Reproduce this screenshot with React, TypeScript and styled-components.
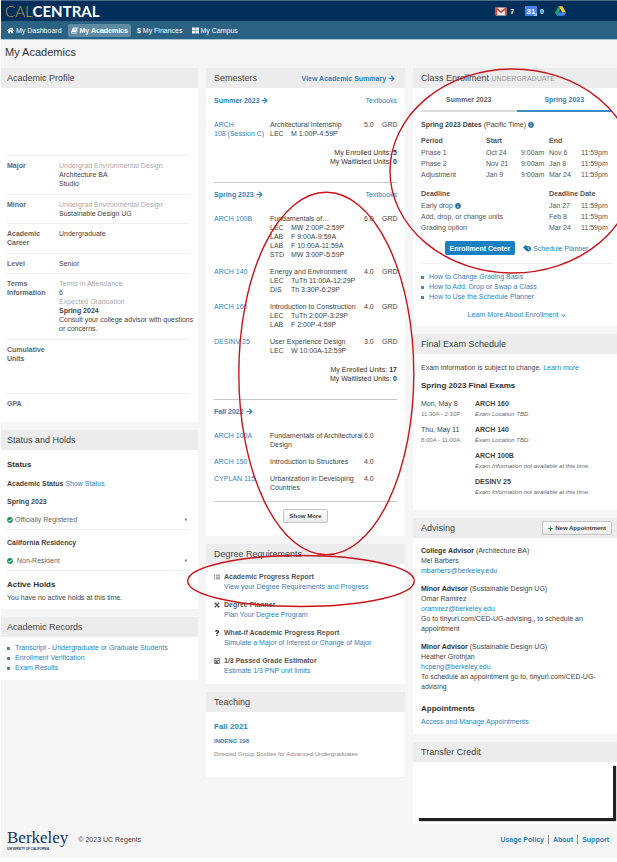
import React from "react";
import styled, { createGlobalStyle, css } from "styled-components";
import {
  FaArrowRight,
  FaCalculator,
  FaCaretLeft,
  FaCheckCircle,
  FaChevronDown,
  FaHome,
  FaInfoCircle,
  FaListUl,
  FaPlus,
  FaQuestion,
  FaThLarge,
} from "react-icons/fa";

const GlobalStyle = createGlobalStyle`
  * { box-sizing: border-box; }
  body {
    margin: 0;
    background: #fff;
    color: #444;
    font: 7px/9px "Liberation Sans", Arial, sans-serif;
  }
  h1, h2, h3, h4, p, ul, dl, dd, dt { margin: 0; padding: 0; }
  ul { list-style: none; }
  button { font-family: inherit; cursor: pointer; }
  svg { flex: none; }
`;

const Page = styled.div`
  position: relative;
  margin-left: 1px;
  background: #f5f5f5;
  overflow: hidden;
`;

/* ---------- top bars ---------- */

const TopBar = styled.header`
  display: flex;
  align-items: center;
  justify-content: space-between;
  height: 21px;
  padding: 0 51px 0 4px;
  border-top: 1px solid #47698a;
  background: #022f5a;
`;

const Brand = styled.a`
  font: 300 15px/18px Lato, sans-serif;
  color: #c79a3c;
  text-decoration: none;
  strong {
    font-weight: 700;
    color: #fff;
  }
`;

const Services = styled.div`
  display: flex;
  align-items: center;
  gap: 11px;
`;

const Service = styled.a`
  display: flex;
  align-items: center;
  gap: 3px;
  color: #fff;
  font-weight: 700;
  text-decoration: none;
`;

const NavBar = styled.nav`
  display: flex;
  align-items: center;
  gap: 3px;
  height: 19px;
  padding: 0 3px;
  border-bottom: 1px solid #a9c6d6;
  background: #2b6283;
`;

const NavItem = styled.a<{ $active?: boolean }>`
  display: flex;
  align-items: center;
  gap: 2px;
  height: 13px;
  padding: 0 3px;
  border-radius: 2px;
  color: #fff;
  text-decoration: none;
  ${(p) => p.$active && css`
    background: #5f8aa4;
    font-weight: 700;
  `}
`;

const PageTitle = styled.h1`
  padding: 6px 4px 9px;
  font-size: 11px;
  line-height: 13px;
  font-weight: 400;
  color: #333;
`;

/* ---------- cards ---------- */

const Columns = styled.main`
  display: grid;
  grid-template-columns: minmax(0, 197fr) minmax(0, 199fr) minmax(0, 204fr);
  gap: 8px;
  align-items: start;
`;

const Column = styled.div`
  display: flex;
  flex-direction: column;
  gap: 8px;
`;

const CardBox = styled.section`
  background: #fff;
`;

const CardHeader = styled.header<{ $inset: number }>`
  display: flex;
  align-items: center;
  justify-content: space-between;
  height: 20px;
  padding: 0 5px 0 ${(p) => p.$inset}px;
  background: #ececec;
`;

const CardTitle = styled.h2`
  font-size: 9px;
  line-height: 12px;
  font-weight: 400;
  color: #444;
  small {
    font-size: 7px;
    color: #999;
  }
`;

const CardBody = styled.div<{ $pad: string }>`
  padding: ${(p) => p.$pad};
`;

const Link = styled.a<{ $strong?: boolean }>`
  color: #2f83bd;
  text-decoration: none;
  font-weight: ${(p) => (p.$strong ? 700 : 400)};
  svg {
    vertical-align: -1px;
  }
`;

const Heading = styled.h3`
  font-size: 8px;
  line-height: 10px;
  font-weight: 700;
  color: #333;
`;

const SmallHeading = styled.h4`
  font-size: 7px;
  line-height: 9px;
  font-weight: 700;
  color: #444;
`;

const SmallButton = styled.button`
  display: inline-flex;
  align-items: center;
  justify-content: center;
  gap: 2px;
  height: 14px;
  padding: 0 5px;
  border: 1px solid #c4c4c4;
  border-radius: 2px;
  background: linear-gradient(#fff, #ececec);
  color: #444;
  font-size: 6px;
  font-weight: 700;
  line-height: 8px;
  white-space: nowrap;
`;

function Card(props: {
  title: React.ReactNode;
  pad: string;
  inset?: number;
  action?: React.ReactNode;
  children?: React.ReactNode;
}) {
  return (
    <CardBox>
      <CardHeader $inset={props.inset ?? 8}>
        <CardTitle>{props.title}</CardTitle>
        {props.action}
      </CardHeader>
      <CardBody $pad={props.pad}>{props.children}</CardBody>
    </CardBox>
  );
}

/* ---------- academic profile ---------- */

const ProfileList = styled.dl`
  padding-top: 67px;
`;

const ProfileRow = styled.div<{ $height: number }>`
  display: grid;
  grid-template-columns: 52px minmax(0, 1fr);
  min-height: ${(p) => p.$height}px;
  padding: 5px 0;
  border-top: 1px solid #f0f0f0;
  dt {
    padding-right: 6px;
    font-weight: 700;
    color: #666;
  }
  dd {
    white-space: nowrap;
  }
`;

const Muted = styled.div`
  color: #aaa;
`;

/* ---------- status ---------- */

const StatusRow = styled.div`
  display: flex;
  align-items: center;
  gap: 2px;
  height: 20px;
  margin-top: 4px;
  color: #666;
  border-bottom: 1px solid #eee;
  svg:last-child {
    margin-left: auto;
    margin-right: 2px;
  }
`;

const Stack = styled.div<{ $gap: number }>`
  display: flex;
  flex-direction: column;
  gap: ${(p) => p.$gap}px;
`;

const BulletList = styled.ul`
  line-height: 10px;
  li {
    display: flex;
    align-items: center;
    gap: 5px;
  }
  li::before {
    content: "";
    width: 3px;
    height: 3px;
    background: #4e86a8;
  }
`;

/* ---------- semesters ---------- */

const Term = styled.section<{ $last?: boolean }>`
  padding: 7px 0 ${(p) => (p.$last ? 1 : 16)}px;
  border-bottom: 1px solid #c8c8c8;
`;

const TermHeader = styled.div`
  display: flex;
  justify-content: space-between;
  margin-bottom: 14px;
  line-height: 10px;
`;

const Course = styled.div`
  display: grid;
  grid-template-columns: 56px minmax(0, 1fr) 18px 15px;
  margin-bottom: 8px;
  color: #444;
`;

const CourseName = styled.div`
  white-space: pre-line;
`;

const Meeting = styled.div`
  display: grid;
  grid-template-columns: 21px 1fr;
`;

const UnitTotals = styled.div`
  padding-top: 2px;
  text-align: right;
  color: #333;
`;

const ShowMore = styled.div`
  display: flex;
  justify-content: center;
  padding-top: 7px;
`;

type CourseData = {
  code: string;
  name: string;
  units: string;
  graded?: boolean;
  meetings?: [string, string][];
};

const terms: { name: string; enrolled?: string; courses: CourseData[] }[] = [
  {
    name: "Summer 2023",
    enrolled: "5",
    courses: [
      { code: "ARCH\n108 (Session C)", name: "Architectural Internship", units: "5.0", graded: true, meetings: [["LEC", "M 1:00P-4:59P"]] },
    ],
  },
  {
    name: "Spring 2023",
    enrolled: "17",
    courses: [
      {
        code: "ARCH 100B",
        name: "Fundamentals of…",
        units: "6.0",
        graded: true,
        meetings: [["LEC", "MW 2:00P-2:59P"], ["LAB", "F 9:00A-9:59A"], ["LAB", "F 10:00A-11:59A"], ["STD", "MW 3:00P-5:59P"]],
      },
      { code: "ARCH 140", name: "Energy and Environment", units: "4.0", graded: true, meetings: [["LEC", "TuTh 11:00A-12:29P"], ["DIS", "Th 3:30P-6:29P"]] },
      { code: "ARCH 160", name: "Introduction to Construction", units: "4.0", graded: true, meetings: [["LEC", "TuTh 2:00P-3:29P"], ["LAB", "F 2:00P-4:59P"]] },
      { code: "DESINV 25", name: "User Experience Design", units: "3.0", graded: true, meetings: [["LEC", "W 10:00A-12:59P"]] },
    ],
  },
  {
    name: "Fall 2022",
    courses: [
      { code: "ARCH 100A", name: "Fundamentals of Architectural\nDesign", units: "6.0" },
      { code: "ARCH 150", name: "Introduction to Structures", units: "4.0" },
      { code: "CYPLAN 115", name: "Urbanization in Developing\nCountries", units: "4.0" },
    ],
  },
];

/* ---------- degree requirements ---------- */

const Tool = styled.div`
  display: grid;
  grid-template-columns: 10px minmax(0, 1fr);
  line-height: 10px;
  color: #555;
  > svg {
    margin-top: 2px;
  }
`;

const ToolIconX = () => (
  <svg width="6" height="6" viewBox="0 0 12 12" fill="none" stroke="#555">
    <path d="M1.5 1.5 10.5 10.5" strokeWidth="3" />
    <path d="M10.5 1.5 1.5 10.5" strokeWidth="2.4" />
    <path d="M1 4 4 1M8 11 11 8" strokeWidth="1.2" />
  </svg>
);

const tools = [
  { icon: <FaListUl size={6} />, title: "Academic Progress Report", link: "View your Degree Requirements and Progress" },
  { icon: <ToolIconX />, title: "Degree Planner", link: "Plan Your Degree Program" },
  { icon: <FaQuestion size={6} color="#222" />, title: "What-if Academic Progress Report", link: "Simulate a Major of Interest or Change of Major" },
  { icon: <FaCalculator size={6} />, title: "1/3 Passed Grade Estimator", link: "Estimate 1/3 PNP unit limits" },
];

const Caption = styled.p`
  font-size: 6px;
  line-height: 8px;
  color: #888;
`;

/* ---------- enrollment ---------- */

const Tabs = styled.div`
  display: grid;
  grid-template-columns: 1fr 1fr;
`;

const Tab = styled.button<{ $active?: boolean }>`
  height: 24px;
  padding: 0;
  border: 0;
  border-bottom: ${(p) => (p.$active ? "2px solid #3b8cc4" : "2px solid #dcdcdc")};
  background: none;
  color: ${(p) => (p.$active ? "#2f83bd" : "#666")};
  font-size: 7px;
  line-height: 9px;
  font-weight: 700;
`;

const DatesTitle = styled.p`
  display: flex;
  align-items: center;
  gap: 2px;
  margin: 8px 0 6px;
`;

const DateTable = styled.table`
  width: 100%;
  table-layout: fixed;
  border-collapse: collapse;
  line-height: 11px;
  color: #555;
  margin-bottom: 8px;
  th, td {
    padding: 0;
    text-align: left;
    white-space: nowrap;
  }
  th {
    padding-bottom: 1px;
  }
  td svg {
    vertical-align: -1px;
  }
`;

const Actions = styled.div`
  display: flex;
  align-items: center;
  justify-content: center;
  gap: 8px;
  padding-bottom: 8px;
  border-bottom: 1px solid #eee;
  margin-bottom: 8px;
`;

const PrimaryButton = styled.button`
  height: 14px;
  padding: 0 5px;
  border: 0;
  border-radius: 2px;
  background: #1780c2;
  color: #fff;
  font-size: 7px;
  line-height: 9px;
  font-weight: 700;
`;

const CenteredLink = styled.p`
  margin-top: 8px;
  text-align: center;
`;

const PlannerIcon = () => (
  <svg width="8" height="8" viewBox="0 0 16 16">
    <path d="M6 1 0 7l6 6V9.500h3v-5H6z" fill="#1f75ad" />
    <circle cx="10.500" cy="9.500" r="5.500" fill="#1f75ad" />
    <path d="M10.500 6v4l2.500 1.500" fill="none" stroke="#fff" strokeWidth="1.500" />
  </svg>
);

/* ---------- exams ---------- */

const Exams = styled.div`
  display: flex;
  flex-direction: column;
  gap: 6px;
  margin-top: 8px;
`;

const Exam = styled.div`
  display: grid;
  grid-template-columns: 54px minmax(0, 1fr);
  line-height: 10px;
  small {
    display: block;
    font-size: 6px;
    color: #777;
    white-space: nowrap;
  }
  em {
    display: block;
    font-size: 6px;
    color: #666;
    white-space: nowrap;
  }
`;

const exams = [
  { date: "Mon, May 8", time: "11:30A - 2:30P", name: "ARCH 160", note: "Exam Location TBD" },
  { date: "Thu, May 11", time: "8:00A - 11:00A", name: "ARCH 140", note: "Exam Location TBD" },
  { date: "", time: "", name: "ARCH 100B", note: "Exam Information not available at this time." },
  { date: "", time: "", name: "DESINV 25", note: "Exam Information not available at this time." },
];

/* ---------- advising ---------- */

const Advisor = styled.div`
  line-height: 10px;
  white-space: pre-line;
  b {
    color: #333;
  }
`;

const CreditBox = styled.div`
  height: 55px;
  background: #fff;
  box-shadow: 3px 3px 1px #222;
`;

/* ---------- footer ---------- */

const Footer = styled.footer`
  display: flex;
  align-items: center;
  gap: 10px;
  padding: 4px 8px 7px 6px;
`;

const Wordmark = styled.div`
  color: #17365f;
  font: 17px/19px "Liberation Serif", serif;
  small {
    display: block;
    font: 700 3px/4px "Liberation Sans", sans-serif;
  }
`;

const FooterLinks = styled.div`
  display: flex;
  align-items: center;
  margin-left: auto;
  a + a {
    margin-left: 4px;
    padding-left: 4px;
    border-left: 1px solid #888;
  }
`;

/* ---------- hand-drawn ovals over the page ---------- */

const Markup = styled.svg`
  position: absolute;
  left: -1px;
  top: 0;
  pointer-events: none;
`;

const Gmail = () => (
  <svg width="12" height="9" viewBox="0 0 24 18">
    <rect x="1" y="1" width="22" height="16" rx="1.500" fill="#f3f1f0" />
    <path d="M4 17 10 9.500M20 17 14 9.500" stroke="#cfc9c7" strokeWidth="1" />
    <path d="M2.500 17V2.500L12 10.500l9.500-8V17" fill="none" stroke="#d8473a" strokeWidth="3.400" />
  </svg>
);

const Calendar = () => (
  <svg width="12" height="10" viewBox="0 0 24 20">
    <rect width="24" height="20" rx="1.500" fill="#4384ee" />
    <path d="M24 14v6h-6z" fill="#bcd4fb" />
    <text x="12" y="16" textAnchor="middle" fontFamily="Liberation Sans, sans-serif" fontSize="16" fill="#fff">31</text>
  </svg>
);

const Drive = () => (
  <svg width="11" height="10" viewBox="0 0 24 21">
    <path d="M8 0h8l8 14h-8z" fill="#fbc936" />
    <path d="M8 0 0 14l4 7 8-14z" fill="#1fa463" />
    <path d="M8 14h16l-4 7H4z" fill="#4285f4" />
  </svg>
);

const Book = () => (
  <svg width="7" height="7" viewBox="0 0 14 14">
    <path d="M5 1h8.500L10.500 10.500H2.500C1.500 10.500 1.500 12 2.500 12H11l2.500-8 .5 1-2.500 8H2C.5 13 0 11.500.500 10.200L3.300 2.200Q3.800 1 5 1z" fill="#fff" />
    <path d="M5.800 3.500h5M5.200 5.500h5" stroke="#5f8aa4" strokeWidth="1" />
  </svg>
);

const Info = () => <FaInfoCircle size={6} color="#2b6f9f" />;

export default function App() {
  return (
    <>
      <GlobalStyle />
      <Page>
        <TopBar>
          <Brand href="#">CAL<strong>CENTRAL</strong></Brand>
          <Services>
            <Service href="#" aria-label="Mail"><Gmail />7</Service>
            <Service href="#" aria-label="Calendar"><Calendar />0</Service>
            <Service href="#" aria-label="Drive"><Drive /></Service>
          </Services>
        </TopBar>
        <NavBar>
          <NavItem href="#"><FaHome size={7} />My Dashboard</NavItem>
          <NavItem href="#" $active><Book />My Academics</NavItem>
          <NavItem href="#"><b>$</b>My Finances</NavItem>
          <NavItem href="#"><FaThLarge size={7} />My Campus</NavItem>
        </NavBar>
        <PageTitle>My Academics</PageTitle>

        <Columns>
          <Column>
            <Card title="Academic Profile" pad="0 8px 0 6px" inset={6}>
              <ProfileList>
                <ProfileRow $height={39}>
                  <dt>Major</dt>
                  <dd><Muted>Undergrad Environmental Design</Muted>Architecture BA<br />Studio</dd>
                </ProfileRow>
                <ProfileRow $height={29}>
                  <dt>Minor</dt>
                  <dd><Muted>Undergrad Environmental Design</Muted>Sustainable Design UG</dd>
                </ProfileRow>
                <ProfileRow $height={30}>
                  <dt>Academic Career</dt>
                  <dd>Undergraduate</dd>
                </ProfileRow>
                <ProfileRow $height={20}>
                  <dt>Level</dt>
                  <dd>Senior</dd>
                </ProfileRow>
                <ProfileRow $height={66}>
                  <dt>Terms Information</dt>
                  <dd>
                    <Muted>Terms in Attendance</Muted>6
                    <Muted>Expected Graduation</Muted>
                    <b>Spring 2024</b><br />
                    Consult your college advisor with questions<br />
                    or concerns.
                  </dd>
                </ProfileRow>
                <ProfileRow $height={54}><dt>Cumulative Units</dt><dd /></ProfileRow>
                <ProfileRow $height={29}><dt>GPA</dt><dd /></ProfileRow>
              </ProfileList>
            </Card>

            <Card title="Status and Holds" pad="10px 8px 7px 6px" inset={6}>
              <Stack $gap={9}>
                <Heading>Status</Heading>
                <p><b>Academic Status</b> <Link href="#">Show Status</Link></p>
                <SmallHeading>Spring 2023</SmallHeading>
              </Stack>
              <StatusRow>
                <FaCheckCircle size={6} color="#1c8a4a" />Officially Registered
                <FaCaretLeft size={5} />
              </StatusRow>
              <CardBody $pad="8px 0 0"><SmallHeading>California Residency</SmallHeading></CardBody>
              <StatusRow>
                <FaCheckCircle size={6} color="#1c8a4a" />&nbsp;Non-Resident
                <FaCaretLeft size={5} />
              </StatusRow>
              <CardBody $pad="9px 0 0">
                <Stack $gap={3}>
                  <Heading>Active Holds</Heading>
                  <p>You have no active holds at this time.</p>
                </Stack>
              </CardBody>
            </Card>

            <Card title="Academic Records" pad="6px 8px 7px 6px" inset={6}>
              <BulletList>
                <li><Link href="#">Transcript - Undergraduate or Graduate Students</Link></li>
                <li><Link href="#">Enrollment Verification</Link></li>
                <li><Link href="#">Exam Results</Link></li>
              </BulletList>
            </Card>
          </Column>

          <Column>
            <Card
              title="Semesters"
              pad="1px 8px 13px"
              action={
                <CardBody $pad="0 5px 0 0">
                  <Link href="#" $strong>View Academic Summary <FaArrowRight size={7} /></Link>
                </CardBody>
              }
            >
              {terms.map((term) => (
                <Term key={term.name} $last={!term.enrolled}>
                  <TermHeader>
                    <Link href="#" $strong>{term.name} <FaArrowRight size={7} /></Link>
                    {term.enrolled && <Link href="#">Textbooks</Link>}
                  </TermHeader>
                  {term.courses.map((c) => (
                    <Course key={c.code}>
                      <CourseName><Link href="#">{c.code}</Link></CourseName>
                      <CourseName>
                        {c.name}
                        {c.meetings?.map(([kind, time]) => (
                          <Meeting key={kind + time}><span>{kind}</span><span>{time}</span></Meeting>
                        ))}
                      </CourseName>
                      <span>{c.units}</span>
                      <span>{c.graded ? "GRD" : ""}</span>
                    </Course>
                  ))}
                  {term.enrolled && (
                    <UnitTotals>
                      <p>My Enrolled Units: <b>{term.enrolled}</b></p>
                      <p>My Waitlisted Units: <b>0</b></p>
                    </UnitTotals>
                  )}
                </Term>
              ))}
              <ShowMore><SmallButton>Show More</SmallButton></ShowMore>
            </Card>

            <Card title="Degree Requirements" pad="8px 8px 8px">
              <Stack $gap={8}>
                {tools.map((t) => (
                  <Tool key={t.title}>
                    {t.icon}
                    <div><b>{t.title}</b><br /><Link href="#">{t.link}</Link></div>
                  </Tool>
                ))}
              </Stack>
            </Card>

            <Card title="Teaching" pad="10px 8px 19px">
              <Stack $gap={5}>
                <Heading><Link href="#" $strong>Fall 2021</Link></Heading>
                <Caption><Link href="#" $strong>INDENG 198</Link></Caption>
                <Caption>Directed Group Studies for Advanced Undergraduates</Caption>
              </Stack>
            </Card>
          </Column>

          <Column>
            <Card title={<>Class Enrollment <small>UNDERGRADUATE</small></>} pad="0 5px 7px 8px">
              <Tabs>
                <Tab>Summer 2023</Tab>
                <Tab $active>Spring 2023</Tab>
              </Tabs>
              <DatesTitle><span><b>Spring 2023 Dates</b> (Pacific Time)</span><Info /></DatesTitle>
              <DateTable>
                <colgroup><col width="65" /><col width="35" /><col width="28" /><col width="32" /><col /></colgroup>
                <thead>
                  <tr><th>Period</th><th colSpan={2}>Start</th><th colSpan={2}>End</th></tr>
                </thead>
                <tbody>
                  <tr><td>Phase 1</td><td>Oct 24</td><td>9:00am</td><td>Nov 6</td><td>11:59pm</td></tr>
                  <tr><td>Phase 2</td><td>Nov 21</td><td>9:00am</td><td>Jan 8</td><td>11:59pm</td></tr>
                  <tr><td>Adjustment</td><td>Jan 9</td><td>9:00am</td><td>Mar 24</td><td>11:59pm</td></tr>
                </tbody>
              </DateTable>
              <DateTable>
                <colgroup><col width="128" /><col width="32" /><col /></colgroup>
                <thead>
                  <tr><th>Deadline</th><th colSpan={2}>Deadline Date</th></tr>
                </thead>
                <tbody>
                  <tr><td>Early drop <Info /></td><td>Jan 27</td><td>11:59pm</td></tr>
                  <tr><td>Add, drop, or change units</td><td>Feb 8</td><td>11:59pm</td></tr>
                  <tr><td>Grading option</td><td>Mar 24</td><td>11:59pm</td></tr>
                </tbody>
              </DateTable>
              <Actions>
                <PrimaryButton>Enrollment Center</PrimaryButton>
                <Link href="#"><PlannerIcon /> Schedule Planner</Link>
              </Actions>
              <BulletList>
                <li><Link href="#">How to Change Grading Basis</Link></li>
                <li><Link href="#">How to Add, Drop or Swap a Class</Link></li>
                <li><Link href="#">How to Use the Schedule Planner</Link></li>
              </BulletList>
              <CenteredLink><Link href="#">Learn More About Enrollment <FaChevronDown size={5} /></Link></CenteredLink>
            </Card>

            <Card title="Final Exam Schedule" pad="9px 5px 13px 8px">
              <Stack $gap={9}>
                <p>Exam information is subject to change. <Link href="#">Learn more</Link></p>
                <Heading>Spring 2023 Final Exams</Heading>
              </Stack>
              <Exams>
                {exams.map((e) => (
                  <Exam key={e.name}>
                    <div>{e.date}<small>{e.time}</small></div>
                    <div><b>{e.name}</b><em>{e.note}</em></div>
                  </Exam>
                ))}
              </Exams>
            </Card>

            <Card
              title="Advising"
              pad="8px 5px 8px 8px"
              action={<SmallButton><FaPlus size={5} color="#1c8a4a" />New Appointment</SmallButton>}
            >
              <Stack $gap={8}>
                <Advisor>
                  <b>College Advisor</b> (Architecture BA)<br />
                  Mel Barbers<br />
                  <Link href="#">mbarbers@berkeley.edu</Link>
                </Advisor>
                <Advisor>
                  <b>Minor Advisor</b> (Sustainable Design UG)<br />
                  Omar Ramirez<br />
                  <Link href="#">oramirez@berkeley.edu</Link><br />
                  Go to tinyurl.com/CED-UG-advising,, to schedule an<br />
                  appointment
                </Advisor>
                <Advisor>
                  <b>Minor Advisor</b> (Sustainable Design UG)<br />
                  Heather Grothjan<br />
                  <Link href="#">hcpeng@berkeley.edu</Link><br />
                  To schedule an appointment go to, tinyurl.com/CED-UG-<br />
                  advising
                </Advisor>
              </Stack>
              <CardBody $pad="12px 0 0">
                <Stack $gap={3}>
                  <Heading>Appointments</Heading>
                  <p><Link href="#">Access and Manage Appointments</Link></p>
                </Stack>
              </CardBody>
            </Card>

            <Card title="Transfer Credit" pad="1px 4px 6px 3px">
              <CreditBox />
            </Card>
          </Column>
        </Columns>

        <Footer>
          <Wordmark>Berkeley<small>UNIVERSITY OF CALIFORNIA</small></Wordmark>
          <span>© 2023 UC Regents</span>
          <FooterLinks>
            <Link href="#" $strong>Usage Policy</Link>
            <Link href="#" $strong>About</Link>
            <Link href="#" $strong>Support</Link>
          </FooterLinks>
        </Footer>

        <Markup width="617" height="620" fill="none" stroke="#c8141a" strokeWidth="1.400" aria-hidden="true">
          <ellipse cx="512.500" cy="171" rx="122.500" ry="102" />
          <ellipse cx="326.300" cy="373.500" rx="87.500" ry="181.200" />
          <ellipse cx="301" cy="581" rx="113.300" ry="25.500" />
        </Markup>
      </Page>
    </>
  );
}
